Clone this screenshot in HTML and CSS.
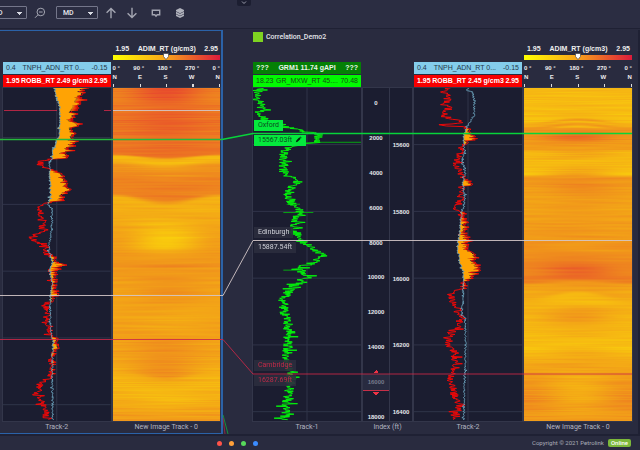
FILE: index.html
```
<!DOCTYPE html>
<html lang="en">
<head>
<meta charset="utf-8">
<title>Well Correlation</title>
<link rel="stylesheet" href="styles.css">
</head>
<body>
<header class="topbar">
  <button class="drawer" aria-label="Expand toolbar"><svg viewBox="0 0 8 6"><path d="M2 1.5 4 3.5 6 1.5"/></svg></button>
  <select class="picker picker-first" aria-label="Index type"><option>MD</option></select>
  <button class="tool" aria-label="Zoom out"><svg viewBox="0 0 12 12"><circle cx="6.8" cy="5" r="3.8"/><path d="M4.1 7.7 1 10.8M5 5h3.6"/></svg></button>
  <select class="picker" aria-label="Depth reference"><option>MD</option></select>
  <button class="tool" aria-label="Move up"><svg viewBox="0 0 12 12"><path class="heavy" d="M6 11.2V1.5M1.6 5.8 6 1.4l4.4 4.4"/></svg></button>
  <button class="tool" aria-label="Move down"><svg viewBox="0 0 12 12"><path class="heavy" d="M6 .8v9.7M1.6 6.2 6 10.6l4.4-4.4"/></svg></button>
  <button class="tool tool-note" aria-label="Comment"><svg viewBox="0 0 12 12"><path class="heavy" d="M2.300 3.200h7.400v4.600H7.200L6 9.200 4.800 7.800H2.300z"/></svg></button>
  <button class="tool tool-layers" aria-label="Layers"><svg viewBox="0 0 12 12"><path class="solid" d="M6 1 10 3v1.200L6 6.200 2 4.200V3z"/><path class="solid" d="M2 4.700 6 6.700l4-2v2L6 8.700l-4-2z"/><path class="solid" d="M2 7.200 6 9.200l4-2v1.800L6 11 2 9z"/></svg></button>
</header>

<main class="workspace">
  <section class="well selected">
    <div class="well-title"></div>
    <div class="tracks pair">
      <article class="track">
        <div class="head">
          <p class="curve sky"><span>0.4</span><span>TNPH_ADN_RT 0...</span><span>-0.15</span></p>
          <p class="curve red"><span>1.95</span><span>ROBB_RT 2.49 g/cm3</span><span>2.95</span></p>
        </div>
        <div class="plot"><svg id="density-a" preserveAspectRatio="none"></svg></div>
        <h3>Track-2</h3>
      </article>
      <article class="track">
        <div class="head">
          <p class="scale"><span>1.95</span><span>ADIM_RT (g/cm3)</span><span>2.95</span></p>
          <div class="ramp"><svg viewBox="0 0 6 7"><path d="M.5.5h5v3L3 6.500.5 3.500z"/></svg></div>
          <p class="angles"><span>0 °</span><span>90 °</span><span>180 °</span><span>270 °</span><span>0 °</span></p>
          <p class="compass"><span>N</span><span>E</span><span>S</span><span>W</span><span>N</span></p>
        </div>
        <div class="plot"><canvas id="image-a" width="108" height="334"></canvas></div>
        <h3>New Image Track - 0</h3>
      </article>
    </div>
  </section>

  <section class="well other">
    <h2 class="well-title"><i></i>Correlation_Demo2</h2>
    <div class="tracks quad">
      <article class="track">
        <div class="head">
          <p class="curve forest"><span>???</span><span>GRM1 11.74 gAPI</span><span>???</span></p>
          <p class="curve lime"><span>18.23</span><span>GR_MXW_RT 45....</span><span>70.48</span></p>
        </div>
        <div class="plot">
          <svg id="gamma" preserveAspectRatio="none"></svg>
          <div class="tag oxford"><b>Oxford</b><b>15567.03ft <svg viewBox="0 0 8 8"><path d="M1 7l.5-2L5 1.500 6.500 3 3 6.500zM5.500 1 6 .5 7.500 2 7 2.500z"/></svg></b></div>
          <div class="tag edinburgh"><b>Edinburgh</b><b>15887.54ft</b></div>
          <div class="tag cambridge"><b>Cambridge</b><b>16287.69ft</b></div>
        </div>
        <h3>Track-1</h3>
      </article>
      <article class="track">
        <div class="head"></div>
        <div class="plot index">
          <ol class="depth-md"><li>0</li><li>2000</li><li>4000</li><li>6000</li><li>8000</li><li>10000</li><li>12000</li><li>14000</li><li class="handle">16000</li><li>18000</li></ol>
          <ol class="depth-ft"><li>15600</li><li>15800</li><li>16000</li><li>16200</li><li>16400</li></ol>
        </div>
        <h3>Index (ft)</h3>
      </article>
      <article class="track">
        <div class="head">
          <p class="curve sky"><span>0.4</span><span>TNPH_ADN_RT 0...</span><span>-0.15</span></p>
          <p class="curve red"><span>1.95</span><span>ROBB_RT 2.45 g/cm3</span><span>2.95</span></p>
        </div>
        <div class="plot"><svg id="density-b" preserveAspectRatio="none"></svg></div>
        <h3>Track-2</h3>
      </article>
      <article class="track">
        <div class="head">
          <p class="scale"><span>1.95</span><span>ADIM_RT (g/cm3)</span><span>2.95</span></p>
          <div class="ramp"><svg viewBox="0 0 6 7"><path d="M.5.5h5v3L3 6.500.5 3.500z"/></svg></div>
          <p class="angles"><span>0 °</span><span>90 °</span><span>180 °</span><span>270 °</span><span>0 °</span></p>
          <p class="compass"><span>N</span><span>E</span><span>S</span><span>W</span><span>N</span></p>
        </div>
        <div class="plot"><canvas id="image-b" width="108" height="334"></canvas></div>
        <h3>New Image Track - 0</h3>
      </article>
    </div>
  </section>

  <svg class="links" viewBox="0 29 640 405" preserveAspectRatio="none">
    <path class="l-red" d="M4 110.500H57M104 110.500h7"/>
    <path class="l-white" d="M113 110.500H220"/>
    <path class="l-green dim" d="M0 139.500H222"/>
    <path class="l-green" d="M222 139.500 253 133.500H632"/>
    <path class="l-white" d="M0 295.500H223L253 240.500H632"/>
    <path class="l-red" d="M0 339.500H223L253 374H632"/>
    <path class="l-green thin" d="M223 415 228 434"/>
    <path class="l-red thin" d="M223 418 225 434"/>
  </svg>
</main>

<footer class="statusbar">
  <div class="dots"><i></i><i></i><i></i><i></i></div>
  <div class="legal">Copyright © 2021 Petrolink <strong>Online</strong></div>
</footer>
<script src="tracks.js"></script>
</body>
</html>
```
FILE: styles.css
```
* { box-sizing: border-box; margin: 0; padding: 0; }
body {
  display: flex; flex-direction: column; min-height: 100vh;
  background: #292b3f; color: #c4c6d0;
  font-family: Roboto, "Liberation Sans", sans-serif; font-size: 7px; line-height: 8px;
  overflow-x: hidden;
}
button { border: 0; background: none; color: inherit; }
i { display: block; }

.topbar {
  position: relative; display: flex; align-items: center;
  height: 29px; padding-bottom: 3px; background: #2b2d42; border-bottom: 1px solid #1f2134;
}
.picker {
  appearance: none; width: 42px; height: 13px; padding-left: 6px;
  border: 1px solid #74768a; border-radius: 1px; color: #e6e7ee;
  font: 500 7px/10px Roboto, sans-serif;
  background: conic-gradient(from -45deg at 50% 100%, #d8dae2 90deg, transparent 0) 31px 5px / 5px 3px no-repeat;
}
.picker-first { margin-left: -15px; }
.tool { width: 12px; height: 12px; margin-right: 9px; }
.picker + .tool { margin-left: 7px; }
.picker-first + .tool { margin-right: 10px; }
.tool svg { display: block; width: 12px; height: 12px; fill: none; stroke: #a3a5b1; stroke-width: 1; }
.tool .heavy { stroke-width: 1.4; }
.tool .solid { fill: #b0b2bc; stroke: none; }
.tool-note, .tool-layers { margin-left: 3px; }
.drawer { position: absolute; top: 0; left: 37%; width: 14px; height: 6px; background: #1c1e31; border-radius: 0 0 2px 2px; }
.drawer svg { display: block; width: 8px; height: 6px; margin: 0 auto; fill: none; stroke: #9a9cab; }

.workspace { position: relative; display: grid; grid-template-columns: 223fr 387fr; gap: 30px; flex: 1; padding-top: 1px; }
.well { display: flex; flex-direction: column; }
.selected { padding: 0 1px 0 3px; border: solid #2b62a8; border-width: 1px 2px 1px 0; }
.other { padding: 1px 6px 1px 0; border-right: 2px solid #1f2134; }
.well-title { display: flex; align-items: center; gap: 3px; height: 12px; color: #e4e5ea; font-size: 7px; font-weight: 500; }
.well-title i { width: 10px; height: 10px; background: #7ed321; }
.tracks { display: grid; gap: 2px; flex: 1; }
.pair { grid-template-columns: 1fr 1fr; }
.quad { grid-template-columns: 108fr 49fr 108fr 108fr; }
.track { display: flex; flex-direction: column; min-width: 0; }
.head { display: flex; flex-direction: column; justify-content: flex-end; gap: 1px; height: 45px; padding-bottom: 1px; font-family: "Liberation Sans", sans-serif; white-space: nowrap; }
.curve { display: flex; justify-content: space-between; height: 12px; padding: 0 3px; font-size: 7px; line-height: 12px; }
.sky { background: #84cdeb; color: #25384a; }
.red { background: #f70000; color: #fff; font-weight: bold; }
.forest { background: #058005; color: #e9f5e9; font-weight: bold; }
.lime { background: #02f902; color: #145014; }
.scale { display: flex; justify-content: space-between; padding: 0 2px 0 3px; color: #eee; font-size: 7px; font-weight: bold; }
.ramp { height: 5px; margin-top: 1px; background: linear-gradient(90deg, #ff0, #f9a21b 50%, #dc1b3c); }
.ramp svg { display: block; width: 6px; height: 7px; margin: -2px auto 0; fill: #fff; stroke: #333; stroke-width: .6; }
.ramp { display: flow-root; }
.angles, .compass { display: flex; justify-content: space-between; color: #eee; font-size: 6px; font-weight: bold; }
.angles { height: 8px; margin-top: 3px; }
.compass { height: 14px; background: repeating-linear-gradient(90deg, #ddd 0 1px, transparent 1px calc(25% - 0.25px)) 0 100% / 100% 3px no-repeat; }

.plot { position: relative; flex: 1; min-height: 330px; background: #1b1d30; box-shadow: 0 0 0 1px #33364a; }
.plot > svg, .plot > canvas { position: absolute; inset: 0; width: 100%; height: 100%; }
.grid { fill: none; stroke: #303449; stroke-width: 1; vector-effect: non-scaling-stroke; }
.trace { fill: none; stroke-width: 1; stroke-linejoin: round; vector-effect: non-scaling-stroke; }
.blue-trace { stroke: #6fa8c2; stroke-opacity: .85; }
.red-trace { stroke: #ec0808; }
.green-trace { stroke: #03ee0b; }
.spike { stroke: #07a512; }
.crossover { fill: #ffa304; }
h3 { height: 12px; font-size: 7px; font-weight: 400; line-height: 13px; text-align: center; white-space: nowrap; color: #b3b5c1; }

.index { display: grid; grid-template-columns: 27fr 22fr; }
.index ol { display: flex; flex-direction: column; justify-content: space-between; list-style: none; font: bold 6px/8px "Liberation Sans", sans-serif; color: #e6e7ec; text-align: center; }
.depth-md { padding-top: 11px; border-right: 1px solid #33364a; }
.depth-ft { padding: 53px 0 5px; }
.handle { position: relative; color: #777a8b; z-index: 1; }
.handle::before { content: ""; position: absolute; inset: -4px 0 -5px; z-index: -1; background: #282b40; border-bottom: 1px solid #c62f48; }
.handle::after {
  content: ""; position: absolute; left: 50%; top: -8px; width: 6px; height: 25px; transform: translateX(-50%);
  background: conic-gradient(from 135deg at 50% 0, #ee3345 90deg, transparent 0) 0 0 / 6px 3px no-repeat,
              conic-gradient(from -45deg at 50% 100%, #ee3345 90deg, transparent 0) 0 100% / 6px 3px no-repeat;
}

.tag { position: absolute; left: 1px; display: flex; flex-direction: column; align-items: flex-start; gap: 4px; transform: translateY(-50%); z-index: 3; }
.tag b { padding: 0 4px; font-size: 7px; font-weight: 400; line-height: 11px; background: rgba(43, 45, 62, .9); white-space: nowrap; color: #cfd0d8; }
.tag svg { width: 7px; height: 7px; margin-left: 1px; vertical-align: -1px; fill: #06250f; }
.oxford { top: 13.5%; }
.oxford b { background: #05e93d; color: #0c4a1e; }
.edinburgh { top: 45.6%; }
.cambridge { top: 85.6%; }
.cambridge b { color: #c02a48; }

.links { position: absolute; inset: 0; width: 100%; height: 100%; fill: none; pointer-events: none; z-index: 2; }
.links path { stroke-width: 1; vector-effect: non-scaling-stroke; }
.links .l-green { stroke: #07d43a; stroke-width: 1.6; }
.links .l-green.dim { stroke: #27b83c; }
.links .l-white { stroke: #d3c6c8; stroke-opacity: .9; }
.links .l-red { stroke: #cb2848; stroke-opacity: .85; }
.links .thin { stroke-width: 1; stroke-opacity: .6; }

.statusbar { display: grid; grid-template-columns: 1fr auto 1fr; align-items: center; height: 16px; padding: 0 9px; border-top: 2px solid #1f2134; }
.dots { grid-column: 2; display: flex; gap: 7px; margin-right: 166px; }
.dots i { width: 5px; height: 5px; border-radius: 50%; background: #ff5349; }
.dots i:nth-child(2) { background: #ffa03a; }
.dots i:nth-child(3) { background: #57d95b; }
.dots i:nth-child(4) { background: #3b8cff; }
.legal { display: flex; justify-content: flex-end; gap: 4px; font-size: 6px; white-space: nowrap; color: #a9abb8; }
.legal strong { padding: 0 3px; border-radius: 2px; background: #7cb83a; color: #fff; font-weight: 500; }
```
FILE: tracks.js
```
// Each series is a flat list: depth, value, depth, value ...
const series = {
  densityA: {
    neutron: [8,165,40,172,60,180,100,182,150,180,170,170,200,160,220,158,235,148,250,152,280,150,300,153,330,153,350,148,358,145,370,157,430,158,450,155,480,148,510,150,530,160,545,152,560,150,580,155,600,158,640,152,700,152,750,155,765,160,850,158,1005,160],
    density: [8,260,20,250,40,240,60,235,75,225,95,215,100,210,115,235,130,222,165,220,180,212,205,200,218,205,221,165,228,125,240,122,248,145,255,155,262,175,270,190,290,192,310,205,330,195,345,185,352,155,356,130,370,120,400,125,410,135,440,125,455,95,470,110,490,130,508,145,515,160,530,175,540,185,550,165,600,165,632,170,650,150,660,135,680,150,700,140,720,150,752,150,757,165,775,172,800,168,820,155,840,160,870,155,885,140,895,122,910,120,930,110,945,125,960,135,1005,140]
  },
  densityB: {
    neutron: [8,205,15,200,20,218,50,223,90,222,110,210,130,200,145,190,200,193,230,185,250,195,270,195,290,188,340,195,370,190,400,182,440,180,465,175,485,172,525,177,560,190,650,190,690,185,697,195,760,197,860,195,920,192,1005,192],
    density: [8,150,20,130,35,150,50,140,70,145,90,135,97,130,104,180,112,185,118,125,121,130,124,195,130,200,145,205,158,225,170,200,180,190,200,180,220,175,242,168,260,180,275,190,290,205,298,212,305,185,350,180,372,165,378,180,400,190,425,200,440,190,465,205,480,195,500,205,510,220,525,215,545,240,560,230,575,220,588,195,610,190,617,165,632,150,650,160,670,175,695,185,720,175,735,165,745,150,780,145,800,165,860,160,885,148,910,160,940,165,960,180,985,170,1005,170]
  },
  gamma: [8,45,30,38,50,45,70,50,72,70,80,42,95,50,105,65,118,105,130,150,140,185,143,215,150,222,165,215,172,215,175,165,190,125,210,115,265,115,275,140,290,160,305,140,330,130,350,140,358,140,370,155,382,170,390,160,410,150,430,150,465,160,475,180,485,200,500,220,510,238,530,210,540,185,545,160,560,170,570,185,577,195,585,165,592,175,600,145,620,130,640,115,660,115,690,120,710,130,740,125,770,130,810,125,850,130,885,140,920,130,960,125,1000,120],
  imageA: {
    bow: [8,0,190,0,205,10,250,10,300,14,325,20,360,20,400,0,835,0,870,20,890,20,940,0,1008,0],
    edge: [8,.62,60,.68,110,.74,160,.68,205,.7,211,.22,225,.2,240,.5,280,.6,325,.6,335,.25,400,.3,470,.38,520,.45,540,.48,543,.65,547,.45,600,.4,700,.35,760,.38,820,.36,860,.28,900,.2,950,.28,1008,.45],
    centre: [8,1,40,.92,60,.82,110,.88,160,.76,215,.75,221,.3,235,.12,247,.4,290,.6,343,.68,353,.45,360,.3,400,.25,445,.1,465,.02,490,.12,510,.4,540,.48,543,.7,547,.45,620,.5,700,.32,750,.35,765,.52,875,.5,885,.3,930,.15,960,.25,1008,.45]
  },
  imageB: {
    bow: [8,0,80,0,95,-12,125,-12,135,0,590,0,610,-20,640,-20,680,0,1008,0],
    edge: [8,.2,60,.18,110,.15,120,.25,130,.5,190,.45,200,.2,250,.15,268,.1,275,.45,320,.4,350,.35,450,.42,500,.5,540,.6,590,.65,600,.38,660,.25,720,.22,790,.12,830,.3,900,.48,950,.54,1008,.4],
    centre: [8,.2,60,.2,95,.2,102,.5,108,.15,115,.45,122,.15,130,.5,155,.8,175,.5,225,.2,250,.3,280,.5,300,.6,340,.4,450,.45,490,.45,520,.6,548,.85,580,.75,590,.45,615,.35,625,.12,660,.25,695,.48,720,.3,775,.15,830,.35,900,.25,1008,.4]
  }
};

function randomFrom(seed) {
  return () => {
    seed = (seed * 1664525 + 1013904223) >>> 0;
    return seed / 4294967296;
  };
}

function valueAt(points, depth) {
  for (let i = 2; i < points.length; i += 2) {
    if (depth <= points[i]) {
      const t = (depth - points[i - 2]) / (points[i] - points[i - 2]);
      return points[i - 1] + Math.max(0, t) * (points[i + 1] - points[i - 1]);
    }
  }
  return points[points.length - 1];
}

function sample(points, noise, step, seed) {
  const random = randomFrom(seed);
  const out = [];
  for (let d = 8; d <= 1005; d += step) {
    const spike = random() < 0.1 ? 2.2 : 1;
    out.push([valueAt(points, d) + (random() - 0.5) * 2 * noise * spike, d]);
  }
  return out;
}

const line = pts => 'M' + pts.map(p => p[0].toFixed(1) + ' ' + p[1]).join('L');

function draw(id, left, firstRule, shapes) {
  const svg = document.getElementById(id);
  svg.setAttribute('viewBox', `${left} 8 324 1000`);
  let rules = `M${left + 162} 8V1008`;
  for (let i = 0; i < 5; i++) rules += `M${left} ${firstRule + i * 200.5}h324`;
  svg.innerHTML = `<path class="grid" d="${rules}"/>` +
    shapes.map(s => `<path class="${s[0]}" d="${s[1]}"/>`).join('');
}

function drawDensity(id, left, firstRule, data, seed) {
  const neutron = sample(data.neutron, 3, 2, seed);
  const density = sample(data.density, 12, 2, seed + 7);
  const clipped = density.map((p, i) => [Math.max(p[0], neutron[i][0]), p[1]]);
  draw(id, left, firstRule, [
    ['trace red-trace', line(density)],
    ['crossover', line(neutron.concat(clipped.map(p => [p[0] - 5, p[1]]).map((p, i) => [Math.max(p[0], neutron[i][0]), p[1]]).reverse())) + 'Z'],
    ['trace blue-trace', line(neutron)]
  ]);
}

function drawImage(id, data, seed) {
  const canvas = document.getElementById(id);
  const ctx = canvas.getContext('2d');
  const random = randomFrom(seed);
  const stops = [[250, 208, 12], [240, 146, 28], [232, 78, 44]];
  const { width, height } = canvas;
  const pixels = ctx.createImageData(width, height);
  for (let y = 0; y < height; y++) {
    const depth = 8 + y * 3;
    const bow = valueAt(data.bow, depth);
    const shift = (random() - 0.5) * 0.11, swing = (random() - 0.5) * 0.12, phase = random() * 6;
    for (let x = 0; x < width; x++) {
      const u = x / (width - 1);
      const arc = Math.sin(Math.PI * u) ** 2;
      const edge = valueAt(data.edge, depth - bow * arc);
      const centre = valueAt(data.centre, depth + bow * (1 - arc));
      let v = edge + (centre - edge) * arc + shift + swing * Math.sin(u * 6 + phase);
      v = Math.min(1, Math.max(0, v)) * 2;
      const k = Math.min(1, Math.floor(v)), f = v - k;
      const o = (y * width + x) * 4;
      for (let c = 0; c < 3; c++) pixels.data[o + c] = stops[k][c] + (stops[k + 1][c] - stops[k][c]) * f;
      pixels.data[o + 3] = 255;
    }
  }
  ctx.putImageData(pixels, 0, 0);
}

drawDensity('density-a', 10, 157, series.densityA, 11);
drawDensity('density-b', 42, 178, series.densityB, 29);
draw('gamma', 24, 178, [
  ['trace spike', 'M160 175L222 171H348M115 382H205M125 357H165M115 555H170'],
  ['trace green-trace', line(sample(series.gamma, 15, 1.5, 5))]
]);
drawImage('image-a', series.imageA, 3);
drawImage('image-b', series.imageB, 17);
```
